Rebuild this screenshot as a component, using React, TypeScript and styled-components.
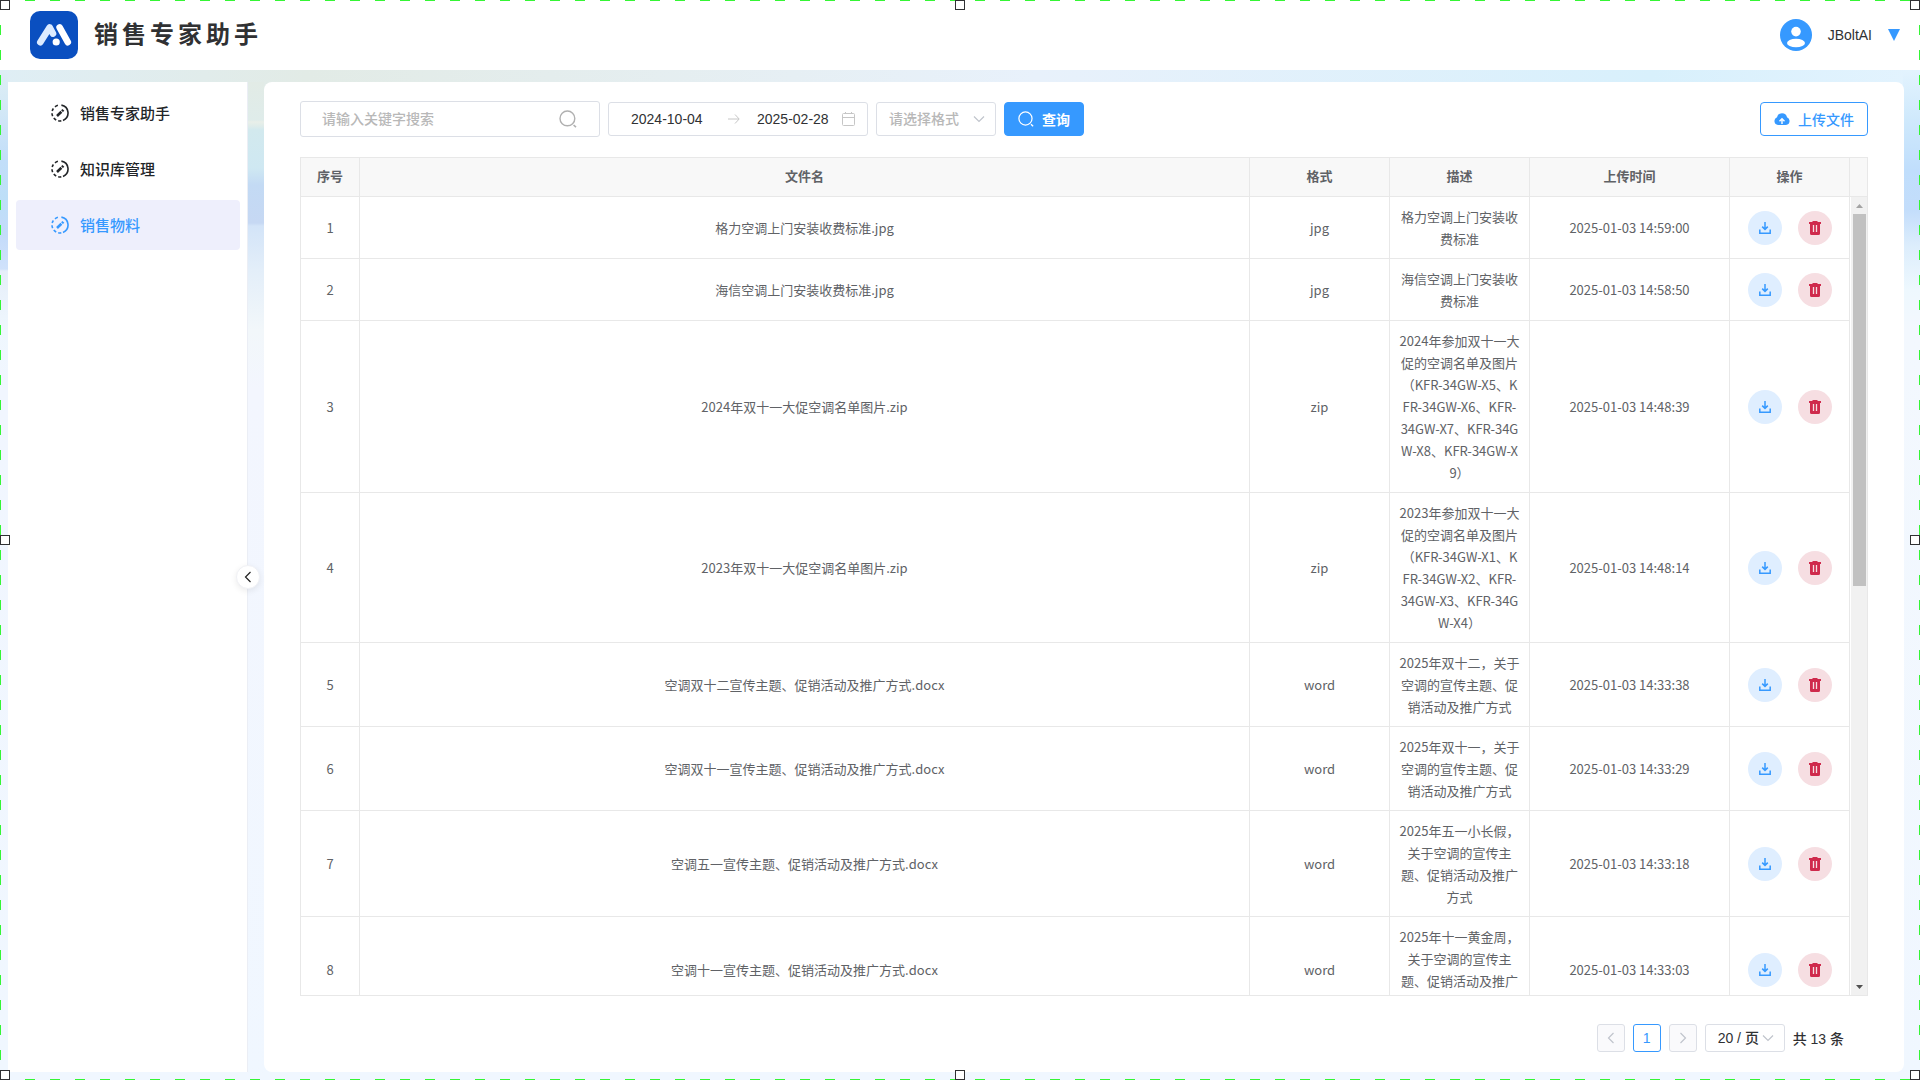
import React from "react";
import styled, { createGlobalStyle, css } from "styled-components";

const LATIN = `"Liberation Sans", "Noto Sans CJK SC", sans-serif`;
const CJK = `"Noto Sans CJK SC", "Noto Sans", sans-serif`;
const BLUE = "#3699ff";
const LINE = "#e8e8e8";
const FIELD = "#dcdfe6";

const GlobalStyle = createGlobalStyle`
  *, *::before, *::after { box-sizing: border-box; }
  body { margin: 0; font-family: ${LATIN}; font-size: 14px; color: #303133; }
  button, input, select { font: inherit; color: inherit; }
  svg { display: block; flex: none; }
`;

const Page = styled.div`
  position: relative;
  display: flex;
  flex-direction: column;
  height: 100vh;
  overflow: hidden;
  background: #f0f7ff;
`;

const dash = (dir: string) =>
  `repeating-linear-gradient(${dir}, #35f535 0 10px, transparent 10px 25px)`;

const Selection = styled.div`
  position: absolute;
  inset: 0;
  pointer-events: none;
  display: grid;
  grid-template-columns: 1fr 10px 1fr;
  grid-template-rows: 1fr 10px 1fr;
  background: ${dash("to right")} 0 0 / 100% 1px no-repeat,
    ${dash("to right")} 0 100% / 100% 1px no-repeat,
    ${dash("to bottom")} 0 0 / 1px 100% no-repeat,
    ${dash("to bottom")} 100% 0 / 1px 100% no-repeat;
`;

const Handle = styled.i<{ $row: number; $col: number }>`
  grid-row: ${(p) => p.$row};
  grid-column: ${(p) => p.$col};
  justify-self: ${(p) => (p.$col === 3 ? "end" : "start")};
  align-self: ${(p) => (p.$row === 3 ? "end" : "start")};
  width: 10px;
  height: 10px;
  border: 1px solid #303133;
  background: #fff;
`;

const TopBar = styled.header`
  display: flex;
  align-items: center;
  justify-content: space-between;
  flex: none;
  height: 70px;
  padding: 0 20px 0 30px;
  background: #fff;
`;

const Brand = styled.div`
  display: flex;
  align-items: center;
  gap: 16px;
`;

const Title = styled.h1`
  margin: 0;
  padding-bottom: 4px;
  font: 700 24px/34px ${CJK};
  letter-spacing: 4px;
`;

const UserButton = styled.button`
  display: flex;
  align-items: center;
  gap: 16px;
  padding: 0;
  border: 0;
  background: none;
  cursor: pointer;
`;

const Body = styled.div`
  display: flex;
  gap: 16px;
  flex: 1;
  min-height: 0;
  padding: 12px 16px 8px 8px;
  background:
    linear-gradient(#dfeef5 0, #d6eaf6 30px, #c2def9 90px, #bddff8 130px, #c4dbfa 165px, #d0e2fb 199px, #e6eef9 201px, #eff7fe 260px, #f1f6ff 320px, #f0f7ff 100%) 0 0 / 8px 100% no-repeat,
    linear-gradient(#e2ebe6 0, #dfecea 38px, #e9efe9 40px, #dfecea 44px, #d2e9ee 48px, #cfe8f2 86px, #c3daf4 103px, #c6d8f3 141px, #d3e4f8 144px, #e3eef9 188px, #f2f7fa 248px, #f3f6fe 308px, #f0f7ff 100%) 247px 12px / 17px 100% no-repeat,
    linear-gradient(#e3f3fe 0, #cfe9fc 50px, #c0defc 100px, #c3ddfb 140px, #dcedfc 175px, #eef8fe 220px, #f3f8fe 260px, #f0f7ff 100%) 100% 0 / 17px 100% no-repeat,
    linear-gradient(to right, #dfeef5, #e2ebe6 16%, #e8f1fb 54%, #d8f0fc 86%, #e3f3fe) 0 0 / 100% 20px no-repeat,
    #f0f7ff;
`;

const Sidebar = styled.aside`
  position: relative;
  flex: none;
  width: 240px;
  padding: 6px 7px 6px 8px;
  border-right: 1px solid #ebeef5;
  background: #fff;
`;

const Menu = styled.nav`
  display: flex;
  flex-direction: column;
  gap: 6px;
`;

const MenuLink = styled.a<{ $active?: boolean }>`
  display: flex;
  align-items: center;
  gap: 11px;
  height: 50px;
  padding: 0 0 1px 35px;
  border-radius: 4px;
  font: 500 15px/22px ${CJK};
  text-decoration: none;
  color: ${(p) => (p.$active ? BLUE : "#222528")};
  background: ${(p) => (p.$active ? "#eeeffc" : "transparent")};
`;

const Collapse = styled.button`
  position: absolute;
  top: 50%;
  right: -13px;
  transform: translateY(-50%);
  display: grid;
  place-items: center;
  width: 24px;
  height: 24px;
  padding: 0;
  border: 1px solid #f0f1f5;
  border-radius: 50%;
  background: #fff;
  box-shadow: 0 2px 6px rgba(0, 0, 0, 0.08);
`;

const Main = styled.main`
  display: flex;
  flex-direction: column;
  flex: 1;
  min-width: 0;
  padding: 19px 36px 20px;
  border-radius: 8px;
  background: #fff;
`;

const Toolbar = styled.form`
  display: flex;
  align-items: center;
  gap: 8px;
  margin-bottom: 20px;
`;

const fieldBox = css`
  border: 1px solid ${FIELD};
  border-radius: 3px;
  background: #fff;
`;

const SearchField = styled.label`
  ${fieldBox}
  display: flex;
  align-items: center;
  width: 300px;
  height: 36px;
  padding: 0 22px 0 21px;
  color: #b0b0b0;
`;

const BareInput = styled.input`
  flex: 1;
  min-width: 0;
  padding: 0;
  border: 0;
  outline: 0;
  background: none;
  color: #303133;
  &::placeholder { color: #b8b8b8; font-weight: 500; opacity: 1; }
`;

const DateRange = styled.div`
  ${fieldBox}
  display: flex;
  align-items: center;
  width: 260px;
  height: 34px;
  padding: 0 11px 0 22px;
  color: #c6c6c6;
`;

const DateInput = styled(BareInput)<{ $end?: boolean }>`
  flex: ${(p) => (p.$end ? "1" : "0 0 97px")};
  margin-left: ${(p) => (p.$end ? "17px" : "0")};
`;

const SelectBox = styled.div<{ $w: number; $h: number }>`
  display: grid;
  align-items: center;
  width: ${(p) => p.$w}px;
  height: ${(p) => p.$h}px;
  color: #c0c4cc;
  & > * { grid-area: 1 / 1; }
  & > svg { justify-self: end; margin-right: 11px; pointer-events: none; }
`;

const Select = styled.select<{ $muted?: boolean }>`
  ${fieldBox}
  appearance: none;
  width: 100%;
  height: 100%;
  padding: 0 12px;
  outline: 0;
  font-weight: 500;
  color: ${(p) => (p.$muted ? "#b8b8b8" : "#303133")};
`;

const Button = styled.button<{ $primary?: boolean }>`
  display: flex;
  align-items: center;
  justify-content: center;
  gap: 8px;
  height: 34px;
  padding: 0 13px;
  border: 1px solid ${BLUE};
  border-radius: 4px;
  font-weight: ${(p) => (p.$primary ? 700 : 500)};
  color: ${(p) => (p.$primary ? "#fff" : BLUE)};
  background: ${(p) => (p.$primary ? BLUE : "#fff")};
  cursor: pointer;
`;

const Spacer = styled.div`
  flex: 1;
`;

const Grid = styled.div`
  display: flex;
  flex-direction: column;
  flex: 1;
  min-height: 0;
  border: 1px solid ${LINE};
`;

const HeadRow = styled.div`
  display: flex;
  flex: none;
  background: #f8f8f8;
  border-bottom: 1px solid ${LINE};
`;

const Gutter = styled.div`
  flex: none;
  width: 17px;
`;

const BodyRow = styled.div`
  display: flex;
  flex: 1;
  min-height: 0;
`;

const Scroller = styled.div`
  flex: 1;
  overflow: auto;
  scrollbar-width: none;
`;

const Table = styled.table`
  flex: 1;
  width: 100%;
  table-layout: fixed;
  border-collapse: separate;
  border-spacing: 0;
  font: 400 13px/22px ${CJK};
  text-align: center;
  color: #606266;
`;

const Th = styled.th`
  height: 38px;
  padding: 0 8px 2px;
  border-right: 1px solid ${LINE};
  font-weight: 700;
`;

const Td = styled.td`
  padding: 9px 0 8px;
  border-right: 1px solid ${LINE};
  border-bottom: 1px solid ${LINE};
  white-space: pre;
`;

const Actions = styled.div`
  display: flex;
  justify-content: center;
  gap: 16px;
`;

const RoundButton = styled.button<{ $danger?: boolean }>`
  display: grid;
  place-items: center;
  width: 34px;
  height: 34px;
  padding: 0;
  border: 0;
  border-radius: 50%;
  color: ${(p) => (p.$danger ? "#cf2a4c" : BLUE)};
  background: ${(p) => (p.$danger ? "#f6dee2" : "#dfeeff")};
  cursor: pointer;
`;

const ScrollBar = styled.div`
  display: flex;
  flex-direction: column;
  flex: none;
  width: 16px;
  margin-left: 1px;
  background: #f1f1f1;
`;

const ScrollArrow = styled.span<{ $down?: boolean }>`
  display: grid;
  place-items: center;
  height: 17px;
  color: ${(p) => (p.$down ? "#505050" : "#a3a3a3")};
`;

const ScrollTrack = styled.div`
  flex: 1;
  padding: 0 1px 0 2px;
`;

const ScrollThumb = styled.div`
  height: 48.7%;
  background: #c1c1c1;
`;

const Pager = styled.nav`
  display: flex;
  align-items: center;
  justify-content: flex-end;
  gap: 8px;
  margin-top: 28px;
  padding-right: 24px;
  font-weight: 500;
`;

const PageButton = styled.button<{ $current?: boolean }>`
  display: grid;
  place-items: center;
  width: 28px;
  height: 28px;
  padding: 0;
  border: 1px solid ${(p) => (p.$current ? BLUE : FIELD)};
  border-radius: 3px;
  color: ${(p) => (p.$current ? BLUE : "#c0c4cc")};
  background: ${(p) => (p.$current ? "#fff" : "#fafafc")};
`;

const Logo = () => (
  <svg width="48" height="48" viewBox="0 0 48 48" fill="none" strokeLinecap="round" strokeLinejoin="round">
    <rect width="48" height="48" rx="10" fill="#0a4fc0" />
    <path d="M10.3 31.3 19.6 16.4 23 22.6" stroke="#dcebff" strokeWidth="6.6" />
    <path d="M29.6 16.4 37.8 31.2" stroke="#fff" strokeWidth="6.6" />
    <circle cx="26.2" cy="31" r="3.6" fill="#fff" />
  </svg>
);

const Avatar = () => (
  <svg width="32" height="32" viewBox="0 0 32 32">
    <circle cx="16" cy="16" r="16" fill={BLUE} />
    <circle cx="16" cy="12.6" r="4.8" fill="#fff" />
    <ellipse cx="16" cy="24" rx="9" ry="4.3" fill="#fff" />
  </svg>
);

const CaretIcon = () => (
  <svg width="12" height="12" viewBox="0 0 12 12" fill={BLUE}>
    <path d="M0 0h12L6 12z" />
  </svg>
);

const EditRing = () => (
  <svg width="18" height="18" viewBox="0 0 18 18" fill="none" stroke="currentColor" strokeWidth="1.6">
    <path d="M10.4 1.1A8 8 0 0 1 12 16.4" />
    <path d="M10.3 16.9A8 8 0 0 1 7.2 16.8" />
    <path d="M5.2 16A8 8 0 0 1 2.8 14" />
    <path d="M1.7 12.2A8 8 0 0 1 1 9.2" />
    <path d="M1.2 7A8 8 0 0 1 2.4 4.5" />
    <path d="M4 2.8A8 8 0 0 1 6.9 1.3" />
    <path d="M6 12 10.4 7.8" strokeWidth="2.6" />
    <path d="M11 7.2 12.4 5.8" strokeWidth="2.6" />
  </svg>
);

const SearchIcon = ({ size }: { size: number }) => (
  <svg width={size} height={size} viewBox="0 0 18 18" fill="none" stroke="currentColor" strokeWidth="1.4">
    <circle cx="8.4" cy="8.4" r="7.4" />
    <path d="M14.6 15 17 17.2" strokeWidth="1.6" />
  </svg>
);

const ArrowIcon = () => (
  <svg width="12" height="12" viewBox="0 0 12 12" fill="none" stroke="currentColor">
    <path d="M0 6h11M7 1.5 11.2 6 7 10.5" />
  </svg>
);

const CalendarIcon = () => (
  <svg width="14" height="14" viewBox="0 0 14 14" fill="none" stroke="currentColor">
    <rect x="0.5" y="1.5" width="12" height="12" rx="1" />
    <path d="M.5 5.5h12M3.500 0v2M9.500 0v2" />
  </svg>
);

const Chevron = ({ d, w = 12, color }: { d: string; w?: number; color?: string }) => (
  <svg width={w} height={w} viewBox="0 0 12 12" fill="none" stroke={color || "currentColor"} strokeWidth="1.2">
    <path d={d} />
  </svg>
);
const DOWN = "M1 3.5 6 8.5 11 3.5";
const LEFT = "M8.5 1 3.5 6 8.5 11";
const RIGHT = "M3.5 1 8.5 6 3.5 11";

const CloudIcon = () => (
  <svg width="16" height="14" viewBox="0 0 16 14">
    <path d="M4 13a4 4 0 0 1-1-7.700A5.100 5.100 0 0 1 13 5.300 4 4 0 0 1 12 13z" fill="currentColor" />
    <path d="M8 12V7.500M5.500 9.300 8 6.800l2.500 2.500" stroke="#fff" strokeWidth="1.4" fill="none" />
  </svg>
);

const DownloadIcon = () => (
  <svg width="12" height="12" viewBox="0 0 12 12" fill="none" stroke="currentColor" strokeWidth="1.5">
    <path d="M6 0v7.200M3.200 4.600 6 7.400l2.800-2.800" />
    <path d="M.8 7.500v3.700h10.400V7.500" />
  </svg>
);

const TrashIcon = () => (
  <svg width="12" height="14" viewBox="0 0 12 14">
    <path d="M0 1h3.500V0h5v1H12v2h-1v9.500a1.500 1.500 0 0 1-1.500 1.500h-7A1.500 1.500 0 0 1 1 12.500V3H0z" fill="currentColor" />
    <path d="M4.500 4v7M7.500 4v7" stroke="#f6dee2" strokeWidth="1.3" />
  </svg>
);

const Triangle = ({ d }: { d: string }) => (
  <svg width="7" height="4" viewBox="0 0 7 4" fill="currentColor">
    <path d={d} />
  </svg>
);

const menu = ["销售专家助手", "知识库管理", "销售物料"];
const headings = ["序号", "文件名", "格式", "描述", "上传时间", "操作"];
const rows = [
  ["格力空调上门安装收费标准.jpg", "jpg", "格力空调上门安装收\n费标准", "14:59:00"],
  ["海信空调上门安装收费标准.jpg", "jpg", "海信空调上门安装收\n费标准", "14:58:50"],
  ["2024年双十一大促空调名单图片.zip", "zip", "2024年参加双十一大\n促的空调名单及图片\n（KFR-34GW-X5、K\nFR-34GW-X6、KFR-\n34GW-X7、KFR-34G\nW-X8、KFR-34GW-X\n9）", "14:48:39"],
  ["2023年双十一大促空调名单图片.zip", "zip", "2023年参加双十一大\n促的空调名单及图片\n（KFR-34GW-X1、K\nFR-34GW-X2、KFR-\n34GW-X3、KFR-34G\nW-X4）", "14:48:14"],
  ["空调双十二宣传主题、促销活动及推广方式.docx", "word", "2025年双十二，关于\n空调的宣传主题、促\n销活动及推广方式", "14:33:38"],
  ["空调双十一宣传主题、促销活动及推广方式.docx", "word", "2025年双十一，关于\n空调的宣传主题、促\n销活动及推广方式", "14:33:29"],
  ["空调五一宣传主题、促销活动及推广方式.docx", "word", "2025年五一小长假，\n关于空调的宣传主\n题、促销活动及推广\n方式", "14:33:18"],
  ["空调十一宣传主题、促销活动及推广方式.docx", "word", "2025年十一黄金周，\n关于空调的宣传主\n题、促销活动及推广\n方式", "14:33:03"],
];

const Columns = () => (
  <colgroup>
    {["59px", "auto", "140px", "140px", "200px", "120px"].map((width, i) => (
      <col key={i} style={{ width }} />
    ))}
  </colgroup>
);

const FileTable = () => (
  <Grid>
    <HeadRow>
      <Table>
        <Columns />
        <thead>
          <tr>{headings.map((h) => <Th key={h} scope="col">{h}</Th>)}</tr>
        </thead>
      </Table>
      <Gutter />
    </HeadRow>
    <BodyRow>
      <Scroller>
        <Table aria-label="销售物料">
          <Columns />
          <tbody>
            {rows.map(([name, type, desc, time], i) => (
              <tr key={name}>
                <Td>{i + 1}</Td>
                <Td>{name}</Td>
                <Td>{type}</Td>
                <Td>{desc}</Td>
                <Td>2025-01-03 {time}</Td>
                <Td>
                  <Actions>
                    <RoundButton aria-label="下载"><DownloadIcon /></RoundButton>
                    <RoundButton $danger aria-label="删除"><TrashIcon /></RoundButton>
                  </Actions>
                </Td>
              </tr>
            ))}
          </tbody>
        </Table>
      </Scroller>
      <ScrollBar aria-hidden>
        <ScrollArrow><Triangle d="M0 4h7L3.500 0z" /></ScrollArrow>
        <ScrollTrack><ScrollThumb /></ScrollTrack>
        <ScrollArrow $down><Triangle d="M0 0h7L3.500 4z" /></ScrollArrow>
      </ScrollBar>
    </BodyRow>
  </Grid>
);

const handles = [[1, 1], [1, 2], [1, 3], [2, 1], [2, 3], [3, 1], [3, 2], [3, 3]];

export default function App() {
  return (
    <Page>
      <GlobalStyle />
      <TopBar>
        <Brand>
          <Logo />
          <Title>销售专家助手</Title>
        </Brand>
        <UserButton>
          <Avatar />
          JBoltAI
          <CaretIcon />
        </UserButton>
      </TopBar>
      <Body>
        <Sidebar>
          <Menu>
            {menu.map((label, i) => (
              <MenuLink key={label} href="#" $active={i === 2}>
                <EditRing />
                {label}
              </MenuLink>
            ))}
          </Menu>
          <Collapse aria-label="收起菜单">
            <Chevron d={LEFT} color="#222" />
          </Collapse>
        </Sidebar>
        <Main>
          <Toolbar onSubmit={(e) => e.preventDefault()}>
            <SearchField>
              <BareInput aria-label="关键字" placeholder="请输入关键字搜索" />
              <SearchIcon size={18} />
            </SearchField>
            <DateRange>
              <DateInput aria-label="开始日期" defaultValue="2024-10-04" />
              <ArrowIcon />
              <DateInput $end aria-label="结束日期" defaultValue="2025-02-28" />
              <CalendarIcon />
            </DateRange>
            <SelectBox $w={120} $h={34}>
              <Select $muted aria-label="格式" defaultValue="">
                <option value="">请选择格式</option>
                <option>jpg</option>
                <option>zip</option>
                <option>word</option>
              </Select>
              <Chevron d={DOWN} />
            </SelectBox>
            <Button $primary type="submit">
              <SearchIcon size={16} />
              查询
            </Button>
            <Spacer />
            <Button type="button">
              <CloudIcon />
              上传文件
            </Button>
          </Toolbar>
          <FileTable />
          <Pager aria-label="分页">
            <PageButton aria-label="上一页"><Chevron d={LEFT} /></PageButton>
            <PageButton $current>1</PageButton>
            <PageButton aria-label="下一页"><Chevron d={RIGHT} /></PageButton>
            <SelectBox $w={80} $h={28}>
              <Select aria-label="每页条数" defaultValue="20">
                <option value="20">20 / 页</option>
                <option value="50">50 / 页</option>
              </Select>
              <Chevron d={DOWN} />
            </SelectBox>
            <span>共 13 条</span>
          </Pager>
        </Main>
      </Body>
      <Selection aria-hidden>
        {handles.map(([r, c]) => (
          <Handle key={`${r}${c}`} $row={r} $col={c} />
        ))}
      </Selection>
    </Page>
  );
}
